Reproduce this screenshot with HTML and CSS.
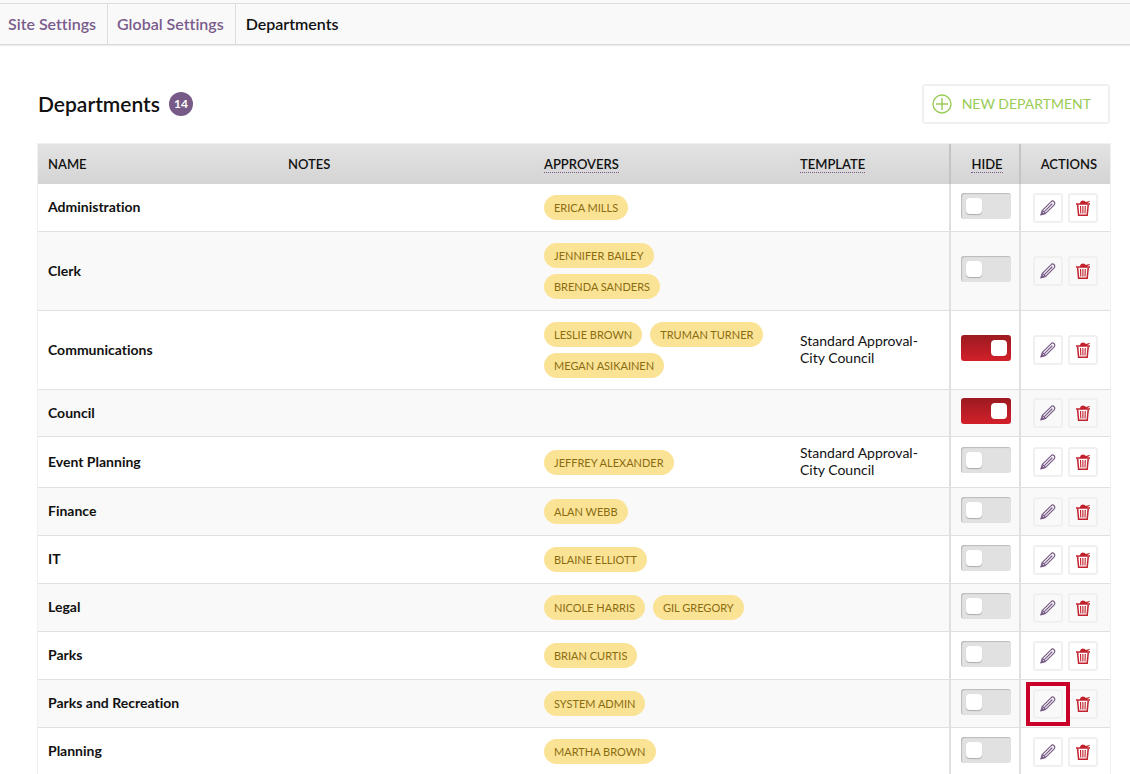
FILE: index.html
```html
<!DOCTYPE html>
<html lang="en">
<head>
    <meta charset="UTF-8">
    <meta name="viewport" content="width=device-width, initial-scale=1.0">
    <title>Departments</title>
    <link rel="stylesheet" href="styles.css">
</head>
<body>
    <svg class="sprite" aria-hidden="true">
        <symbol id="icon-pencil" viewBox="0 0 16 16">
            <g fill="none" stroke="currentColor" stroke-width="1.2" stroke-linejoin="round" stroke-linecap="round">
                <path d="M1 14.8l1.4-4.4L11 1.8a1.8 1.8 0 0 1 3.2 3L5.6 13.4z"/>
                <path d="M2.4 10.4l3 3M4.6 11.4L12 4"/>
            </g>
            <path fill="currentColor" d="M.4 15.4l1.2-4.2 3 3z"/>
        </symbol>
        <symbol id="icon-trash" viewBox="0 0 16 16">
            <path fill="currentColor" d="M1 3.2h4L5.6 1.4 7.6.5l2.2.6.8 1 4-1.2.3.8-3 1.5h3.1v1.6H1z"/>
            <path fill="none" stroke="currentColor" stroke-width="1.5" d="M2.6 4.6l1 10.6h8.6l1-10.6"/>
            <path fill="none" stroke="currentColor" stroke-width="1.1" d="M5.5 6l.3 7.6M7.9 6v7.6M10.3 6l-.3 7.6"/>
        </symbol>
    </svg>

    <nav class="breadcrumb">
        <a href="#">Site Settings</a>
        <a href="#">Global Settings</a>
        <span>Departments</span>
    </nav>

    <main>
        <div class="title-bar">
            <h1>Departments</h1>
            <span class="count">14</span>
            <button type="button" class="new-button">
                <svg viewBox="0 0 20 20" aria-hidden="true"><circle cx="10" cy="10" r="9"/><path d="M10 4v12M4 10h12"/></svg>
                NEW DEPARTMENT
            </button>
        </div>

        <table>
            <thead>
                <tr>
                    <th class="col-name">NAME</th>
                    <th class="col-notes">NOTES</th>
                    <th class="col-approvers"><span class="hint">APPROVERS</span></th>
                    <th class="col-template"><span class="hint">TEMPLATE</span></th>
                    <th class="col-hide"><span class="hint">HIDE</span></th>
                    <th class="col-actions">ACTIONS</th>
                </tr>
            </thead>
            <tbody id="departments"></tbody>
        </table>
    </main>

    <script>
        const departments = [
            { name: 'Administration', approvers: ['ERICA MILLS'] },
            { name: 'Clerk', approvers: ['JENNIFER BAILEY', 'BRENDA SANDERS'] },
            { name: 'Communications', approvers: ['LESLIE BROWN', 'TRUMAN TURNER', 'MEGAN ASIKAINEN'], template: 'Standard Approval-City Council', hide: true },
            { name: 'Council', approvers: [], hide: true },
            { name: 'Event Planning', approvers: ['JEFFREY ALEXANDER'], template: 'Standard Approval-City Council' },
            { name: 'Finance', approvers: ['ALAN WEBB'] },
            { name: 'IT', approvers: ['BLAINE ELLIOTT'] },
            { name: 'Legal', approvers: ['NICOLE HARRIS', 'GIL GREGORY'] },
            { name: 'Parks', approvers: ['BRIAN CURTIS'] },
            { name: 'Parks and Recreation', approvers: ['SYSTEM ADMIN'], selected: true },
            { name: 'Planning', approvers: ['MARTHA BROWN'] }
        ];

        document.getElementById('departments').innerHTML = departments.map(d => `<tr>
            <td class="name">${d.name}</td>
            <td></td>
            <td><div class="chips">${d.approvers.map(a => `<span class="chip">${a}</span>`).join('')}</div></td>
            <td class="template">${d.template || ''}</td>
            <td class="hide"><input type="checkbox" class="toggle" aria-label="Hide ${d.name}" ${d.hide ? 'checked' : ''}></td>
            <td class="actions"><div class="buttons">
                <button type="button" class="icon-button edit ${d.selected ? 'selected' : ''}" aria-label="Edit ${d.name}"><svg><use href="#icon-pencil"/></svg></button>
                <button type="button" class="icon-button delete" aria-label="Delete ${d.name}"><svg><use href="#icon-trash"/></svg></button>
            </div></td>
        </tr>`).join('');
    </script>
</body>
</html>
```
FILE: styles.css
```css
* { box-sizing: border-box; }
body { margin: 0; border-top: 3px solid #f9f9f9; font-family: Lato, sans-serif; font-size: 14px; line-height: 17px; font-variant-ligatures: none; color: #111; background: #fff; }
.sprite { display: none; }

.breadcrumb { display: flex; height: 42px; background: #f9f9f9; border-top: 1px solid #ddd; border-bottom: 1px solid #d8d8d8; box-shadow: 0 1px 1px #eee; font-size: 16px; font-weight: 600; line-height: 40px; }
.breadcrumb a { padding: 0 11px 0 8px; border-right: 1px solid #ddd; color: #795b8c; text-decoration: none; }
.breadcrumb a + a { padding-left: 9px; }
.breadcrumb span { padding: 0 10px; }

main { padding: 39px 19px 0 37px; }
.title-bar { display: flex; align-items: center; margin-bottom: 19px; }
h1 { margin: 0 9px 0 1px; font-size: 21px; font-weight: 600; line-height: 26px; }
.count { width: 24px; height: 24px; border-radius: 50%; background: #775a87; color: #fff; font-size: 12px; font-weight: bold; line-height: 24px; text-align: center; }
.new-button { display: flex; align-items: center; gap: 10px; height: 40px; margin: 0 1px 0 auto; padding: 0 17px 1px 8px; border: 2px solid #f0f0f0; border-radius: 3px; background: #fff; color: #9c5; font: 14px Lato, sans-serif; cursor: pointer; }
.new-button svg { width: 20px; height: 20px; fill: none; stroke: #9c5; stroke-width: 1.4; }

table { width: 100%; table-layout: fixed; border-collapse: separate; border-spacing: 0; border: 1px solid #f0f0f0; }
thead { background: linear-gradient(#e3e3e3, #d4d4d4); }
th { height: 40px; padding: 0 10px; font-size: 13px; font-weight: 600; text-align: left; }
.col-name { width: 240px; }
.col-notes, .col-approvers { width: 256px; }
.col-hide { width: 70px; padding: 0 4px 0 8px; border-left: 2px solid #c4c4c4; text-align: center; }
.col-actions { width: 91px; padding: 0 13px; border-left: 2px solid #c4c4c4; text-align: right; }
.hint { border-bottom: 1px dotted #775a87; }

td { padding: 8px 10px; border-bottom: 1px solid #e0e0e0; }
tbody tr:nth-child(even) { background: #f9f9f9; }
.name, .template { padding-top: 7px; padding-bottom: 9px; }
.name { font-weight: bold; }
.chips { display: flex; flex-wrap: wrap; gap: 6px 8px; margin: 3px 4px 3px 0; }
.chip { height: 25px; padding: 0 10px; border-radius: 13px; background: #fbe396; color: #8a6c10; font-size: 11px; line-height: 26px; }

.hide { padding: 0 0 0 2px; border-left: 2px solid #e0e0e0; }
.toggle { appearance: none; display: block; width: 50px; height: 26px; margin: 0 auto 4px; padding: 5px; border-radius: 3px; background: #e1e1e1; box-shadow: inset 1px 1px 1px #bbb; cursor: pointer; }
.toggle::before { content: ""; display: block; width: 16px; height: 16px; border-radius: 4px; background: #fff; box-shadow: 0 1px 1px #aaa; }
.toggle:checked { padding-right: 4px; background: linear-gradient(#9c1a20, #d2202a); box-shadow: none; }
.toggle:checked::before { margin-left: auto; box-shadow: none; }

.actions { border-left: 2px solid #e0e0e0; }
.buttons { display: flex; justify-content: center; gap: 5px; }
.icon-button { display: flex; align-items: center; justify-content: center; width: 30px; height: 30px; padding: 0; border: 2px solid #f0f0f0; border-radius: 3px; background: none; cursor: pointer; }
.icon-button svg { width: 16px; height: 16px; }
.edit { color: #775a87; }
.delete { color: #c1202c; }
.selected { position: relative; }
.selected::after { content: ""; position: absolute; inset: -9px; border: 4px solid #c8002a; }
```
